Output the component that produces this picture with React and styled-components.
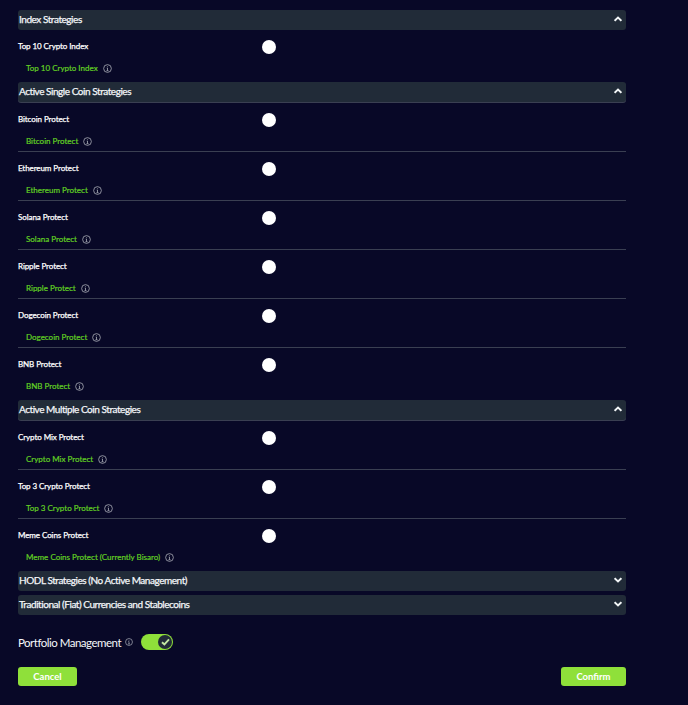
import React from 'react';
import styled, { createGlobalStyle } from 'styled-components';

const groups = [
	{
		title: 'Index Strategies',
		open: true,
		items: [{ name: 'Top 10 Crypto Index' }],
	},
	{
		title: 'Active Single Coin Strategies',
		open: true,
		lined: true,
		items: [
			{ name: 'Bitcoin Protect' },
			{ name: 'Ethereum Protect' },
			{ name: 'Solana Protect' },
			{ name: 'Ripple Protect' },
			{ name: 'Dogecoin Protect' },
			{ name: 'BNB Protect' },
		],
	},
	{
		title: 'Active Multiple Coin Strategies',
		open: true,
		lined: true,
		items: [
			{ name: 'Crypto Mix Protect' },
			{ name: 'Top 3 Crypto Protect' },
			{ name: 'Meme Coins Protect', sub: 'Meme Coins Protect (Currently Bisaro)' },
		],
	},
	{ title: 'HODL Strategies (No Active Management)' },
	{ title: 'Traditional (Fiat) Currencies and Stablecoins' },
];

const InfoIcon = ({ size = 9 }) => (
	<svg width={size} height={size} viewBox="0 0 10 10" fill="none" stroke="#a9acb6" strokeWidth="0.9">
		<circle cx="5" cy="5" r="4.3" />
		<path d="M5 4.4V7.4M3.9 7.4H6.1M4.2 4.4H5" />
		<path d="M5 2.5V3.2" />
	</svg>
);

const Chevron = ({ up }) => (
	<svg width="8" height="6" viewBox="0 0 8 6" fill="none" stroke="#f2f5f7" strokeWidth="1.9">
		<path d={up ? 'M0.6 4.8L4 1.6L7.4 4.8' : 'M0.6 1.2L4 4.4L7.4 1.2'} />
	</svg>
);

const App = () => {
	return (
		<Page>
			<GlobalStyle />
			<Panel>
				{groups.map((group) => (
					<Group key={group.title}>
						<GroupHeader $lined={group.lined}>
							<span>{group.title}</span>
							<Chevron up={group.open} />
						</GroupHeader>
						{group.items && group.items.map((item, i) => (
							<Row key={item.name} $last={i === group.items.length - 1}>
								<RowTop>
									<RowName>{item.name}</RowName>
									<Radio />
								</RowTop>
								<RowSub>
									{item.sub || item.name}
									<InfoIcon />
								</RowSub>
							</Row>
						))}
					</Group>
				))}
			</Panel>
			<Management>
				<ManagementLabel>Portfolio Management</ManagementLabel>
				<InfoIcon size={8} />
				<Toggle>
					<Knob>
						<svg width="9" height="8" viewBox="0 0 9 8" fill="none" stroke="#c4e8a4" strokeWidth="1.9">
							<path d="M1 4.2L3.4 6.4L8 1.4" />
						</svg>
					</Knob>
				</Toggle>
			</Management>
			<Actions>
				<ActionButton $width={59}>Cancel</ActionButton>
				<ActionButton $width={65}>Confirm</ActionButton>
			</Actions>
		</Page>
	);
};

const GlobalStyle = createGlobalStyle`
	html, body {
		margin: 0;
		padding: 0;
		background: #080827;
	}
`;

const Page = styled.div`
	box-sizing: border-box;
	width: 688px;
	height: 705px;
	padding: 10px 62px 0 18px;
	background: #080827;
	color: #fff;
	font-family: Lato, "Liberation Sans", sans-serif;
	overflow: hidden;
`;

const Panel = styled.div`
	display: flex;
	flex-direction: column;
`;

const Group = styled.section`
	display: flex;
	flex-direction: column;

	&:nth-child(4) {
		margin-bottom: 4px;
	}
`;

const GroupHeader = styled.div`
	display: flex;
	justify-content: space-between;
	align-items: center;
	height: 20px;
	padding: 0 4px 2px 1px;
	box-sizing: border-box;
	background: #212b38;
	border-radius: 3px;
	font-size: 10px;
	font-weight: 400;
	letter-spacing: -0.45px;
	-webkit-text-stroke: 0.25px #f4f7fa;
	color: #f4f7fa;
	box-shadow: ${({ $lined }) => ($lined ? '0 1px 0 #3a3f52' : 'none')};
	margin-bottom: ${({ $lined }) => ($lined ? '1px' : '0')};
`;

const Row = styled.div`
	display: flex;
	flex-direction: column;
	height: ${({ $last }) => ($last ? '52px' : '48px')};
	border-bottom: ${({ $last }) => ($last ? 'none' : '1px solid #3a3f52')};
`;

const RowTop = styled.div`
	display: flex;
	align-items: center;
	height: 14px;
	margin-top: 10px;
`;

const RowName = styled.div`
	align-self: flex-start;
	width: 244px;
	font-size: 8px;
	line-height: 12px;
	letter-spacing: -0.08px;
	font-weight: 400;
	-webkit-text-stroke: 0.25px #fff;
	color: #fff;
`;

const Radio = styled.span`
	width: 14px;
	height: 14px;
	border-radius: 50%;
	background: #fff;
`;

const RowSub = styled.div`
	display: flex;
	align-items: center;
	gap: 5px;
	height: 12px;
	margin-top: 8px;
	padding-left: 8px;
	font-size: 8px;
	font-weight: 400;
	-webkit-text-stroke: 0.2px #62d024;
	color: #62d024;
`;

const Management = styled.div`
	display: flex;
	align-items: center;
	gap: 4px;
	height: 18px;
	margin-top: 18px;
`;

const ManagementLabel = styled.span`
	font-size: 11.5px;
	letter-spacing: -0.5px;
	font-weight: 400;
	color: #f4f7fa;
`;

const Toggle = styled.div`
	display: flex;
	justify-content: flex-end;
	align-items: center;
	width: 32px;
	height: 16px;
	margin-left: 4px;
	padding: 0 1px;
	box-sizing: border-box;
	border-radius: 8px;
	background: #8fe03a;
`;

const Knob = styled.span`
	display: flex;
	justify-content: center;
	align-items: center;
	width: 14px;
	height: 14px;
	border-radius: 50%;
	background: #212b38;
`;

const Actions = styled.div`
	display: flex;
	justify-content: space-between;
	margin-top: 16px;
`;

const ActionButton = styled.button`
	width: ${({ $width }) => $width}px;
	height: 19px;
	padding: 0;
	border: none;
	border-radius: 3px;
	background: #8fe03a;
	color: #fff;
	font-family: inherit;
	font-size: 9.5px;
	font-weight: 700;
`;

export default App;
